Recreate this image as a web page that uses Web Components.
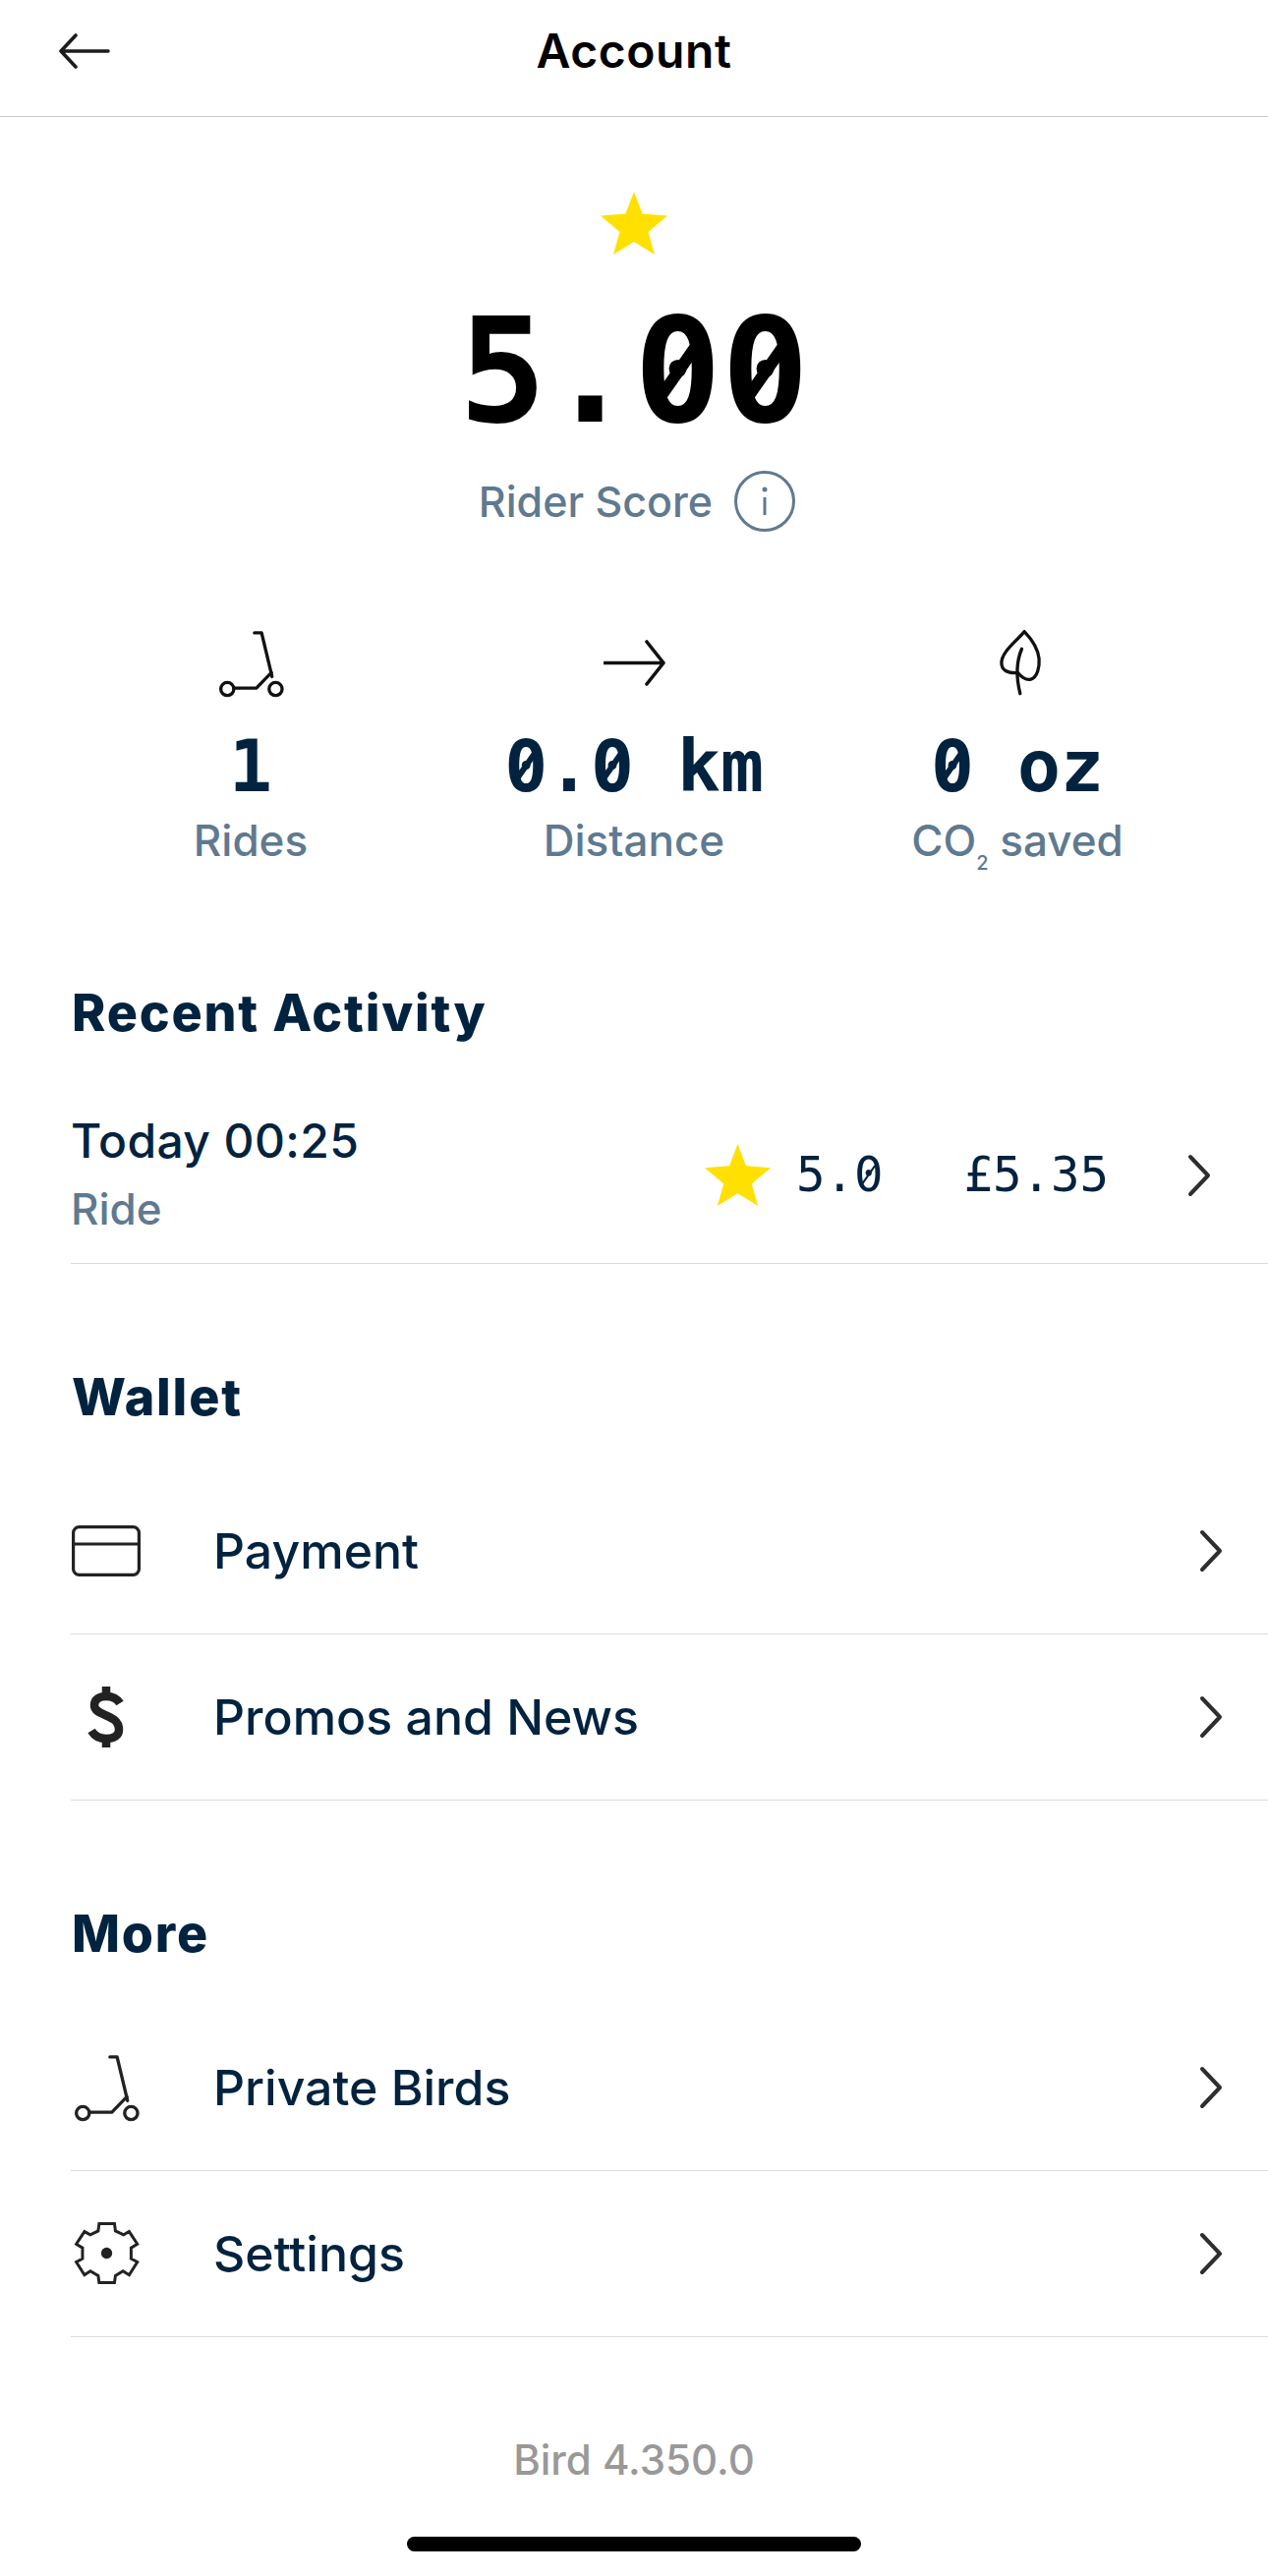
<!DOCTYPE html>
<html lang="en">
<head>
<meta charset="utf-8">
<title>Account</title>
<style>
  html, body { margin: 0; padding: 0; background: #fff; }
  body { width: 1290px; height: 2621px; overflow: hidden; font-family: Inter, sans-serif; }
  account-page { --navy: #02233f; --slate: #5f7a90; --line: #dcdcdc; --mono: "DejaVu Sans Mono", "Liberation Mono", monospace; }
</style>
</head>
<body>
<account-page>
  <app-header>Account</app-header>
  <rider-score value="5.00">Rider Score</rider-score>
  <stat-row>
    <stat-item icon="scooter" value="1">Rides</stat-item>
    <stat-item icon="arrow" value="0.0 km">Distance</stat-item>
    <stat-item icon="leaf" value="0 oz">CO<sub style="font-size:20px;line-height:0;vertical-align:-14px;">2</sub> saved</stat-item>
  </stat-row>
  <section-title style="margin-top:117px">Recent Activity</section-title>
  <activity-row when="Today 00:25" kind="Ride" rating="5.0" price="£5.35"></activity-row>
  <section-title style="margin-top:104px">Wallet</section-title>
  <menu-row icon="card" style="margin-top:40px">Payment</menu-row>
  <menu-row icon="dollar">Promos and News</menu-row>
  <section-title style="margin-top:104px">More</section-title>
  <menu-row icon="scooter" style="margin-top:40px">Private Birds</menu-row>
  <menu-row icon="gear">Settings</menu-row>
  <version-foot>Bird 4.350.0</version-foot>
</account-page>

<script>
// icons are kept here so every shadow root can stamp its own copy
const ICONS = {
  scooter: `<svg viewBox="0 0 256 256" width="85" height="85" fill="none" stroke="currentColor" stroke-width="10" stroke-linejoin="round" stroke-linecap="round"><path d="M138 36h22l32 134"/><path d="M190 158l-46 47H75"/><circle cx="55" cy="208" r="20"/><circle cx="203" cy="208" r="20"/></svg>`,
  arrow: `<svg viewBox="0 0 63 47" width="63" height="47" fill="none" stroke="currentColor" stroke-width="3.6" stroke-linecap="round" stroke-linejoin="round"><path d="M1 23.500h60M44 2l17 21.500L44 45"/></svg>`,
  leaf: `<svg viewBox="0 0 256 256" width="85" height="85" fill="none" stroke="currentColor" stroke-width="10" stroke-linecap="round" stroke-linejoin="round"><path d="M148 32C120 65 78 95 78 128c0 22 17 32 50 30 12 14 27 24 40 20 20-6 27-38 25-63-3-30-23-60-45-83z"/><path d="M140 85c-15 35-18 85-5 137"/></svg>`,
  card: `<svg viewBox="0 0 70 52" width="70" height="52" fill="none" stroke="currentColor" stroke-width="3.2"><rect x="1.600" y="1.600" width="66.800" height="48.800" rx="6"/><path d="M1.600 19h66.800"/></svg>`,
  dollar: `<svg viewBox="0 0 38 64" width="38" height="64" fill="none" stroke="currentColor"><path d="M33 18c-3-5-8-7-14-7-7 0-12 3-12 9 0 12 25 8 25 25 0 6-5 9-13 9-7 0-12-3-15-8" stroke-width="8.500"/><path d="M19 1v10M19 53v10" stroke-width="8.500"/></svg>`,
  gear: `<svg viewBox="0 0 256 256" width="85" height="85" fill="none" stroke="currentColor" stroke-width="9" stroke-linejoin="miter"><path d="M105 38h47l3 22 25 12 17-10 25 38-19 12v33l19 10-25 40-19-12-23 14-3 21h-47l-3-21-24-14-18 12-25-40 19-10v-33l-19-12 25-38 18 10 24-12z"/><circle cx="128" cy="128" r="17" fill="currentColor" stroke="none"/></svg>`,
  star: `<svg viewBox="0 0 68 64" fill="#ffe000"><path d="M34 0l8.600 22.500L68 24.500 48.500 41 55 64 34 51 13 64l6.500-23L0 24.500l25.400-2z"/></svg>`,
  chevron: `<svg viewBox="0 0 24 44" width="24" height="44" fill="none" stroke="#2e2e2e" stroke-width="4" stroke-linecap="round" stroke-linejoin="round"><path d="M3 3l18 19L3 41"/></svg>`
};

// the app's mono face has slashed zeros, so lay a bar over each 0
const ZERO_CSS = `
  .z { position: relative; display: inline-block; }
  .z::after { content: ""; position: absolute; left: .265em; top: calc(50% - .25em); width: var(--slash, .08em); height: .5em; background: currentColor; transform: rotate(35deg); }
`;
const slashed = (s) => s.replace(/0/g, `<span class="z">0</span>`);

function define(name, css, render) {
  customElements.define(name, class extends HTMLElement {
    constructor() {
      super();
      this.attachShadow({ mode: "open" });
    }
    connectedCallback() {
      this.shadowRoot.innerHTML = `<style>${css}</style>${render(this)}`;
    }
  });
}

define("account-page", `
  :host { display: flex; flex-direction: column; width: 1290px; height: 2621px; background: #fff; }
`, () => `<slot></slot>`);

define("app-header", `
  :host { display: flex; align-items: center; justify-content: center; position: relative; box-sizing: border-box; height: 118.5px; border-bottom: 1.5px solid #c8c8c8; padding-bottom: 14px; color: #000; font: 600 48px Inter, sans-serif; letter-spacing: 0.6px; }
  svg { position: absolute; left: 60px; top: 34px; }
`, () => `<svg viewBox="0 0 52 36" width="52" height="36" fill="none" stroke="#1c1c1c" stroke-width="3.6" stroke-linecap="round" stroke-linejoin="round"><path d="M50 18H2M17 2L2 18l15 16"/></svg><slot></slot>`);

define("rider-score", `
  :host { display: flex; flex-direction: column; align-items: center; padding-top: 76px; }
  .star { width: 68px; height: 64px; }
  .star svg { display: block; }
  .value { margin-top: 57px; font: 700 148px/125px var(--mono); color: #000; }
  .label { display: flex; align-items: center; gap: 22px; margin-top: 37px; padding-left: 6px; color: var(--slate); font: 500 43px/64px Inter, sans-serif; }
  .info { width: 62px; height: 62px; color: var(--slate); display: block; }
  ${ZERO_CSS}
`, (el) => `
  <div class="star">${ICONS.star}</div>
  <div class="value">${slashed(el.getAttribute("value"))}</div>
  <div class="label"><slot></slot>
    <svg class="info" viewBox="0 0 62 62" fill="none" stroke="currentColor" stroke-width="3"><circle cx="31" cy="31" r="29.500"/><path d="M31 27v18"/><circle cx="31" cy="19" r="2.500" fill="currentColor" stroke="none"/></svg>
  </div>`);

define("stat-row", `
  :host { display: grid; grid-template-columns: repeat(3, 390px); padding: 99px 0 0 60px; }
`, () => `<slot></slot>`);

define("stat-item", `
  :host { display: flex; flex-direction: column; align-items: center; color: var(--navy); }
  .icon { height: 67px; display: flex; align-items: center; color: #111; }
  .value { margin-top: 28px; font: 700 73px/88px var(--mono); }
  .label { margin-top: 4px; color: var(--slate); font: 500 44px/54px Inter, sans-serif; }
  ${ZERO_CSS}
`, (el) => `
  <div class="icon">${ICONS[el.getAttribute("icon")]}</div>
  <div class="value">${slashed(el.getAttribute("value"))}</div>
  <div class="label"><slot></slot></div>`);

define("section-title", `
  :host { display: block; padding-left: 73px; color: var(--navy); font: 800 52px/64px Inter, sans-serif; letter-spacing: 1.8px; }
`, () => `<slot></slot>`);

define("activity-row", `
  :host { display: flex; align-items: center; box-sizing: border-box; height: 174px; margin: 49px 0 0 72px; padding: 0 58px 16px 0; border-bottom: 1.5px solid var(--line); color: var(--navy); }
  .main { flex: 1; padding-top: 8px; }
  .when { font: 500 48px/60px Inter, sans-serif; letter-spacing: .4px; }
  .kind { color: var(--slate); font: 500 44px/56px Inter, sans-serif; margin-top: 11px; }
  .star { width: 67px; height: 64px; margin: 12px 26px 0 0; }
  .star svg { display: block; }
  .mono { --slash: .05em; font: 400 49px/60px var(--mono); margin-top: 12px; }
  .price { margin-left: 82px; }
  .chev { margin: 12px 0 0 80px; display: flex; }
  ${ZERO_CSS}
`, (el) => `
  <div class="main">
    <div class="when">${el.getAttribute("when")}</div>
    <div class="kind">${el.getAttribute("kind")}</div>
  </div>
  <div class="star">${ICONS.star}</div>
  <div class="mono">${slashed(el.getAttribute("rating"))}</div>
  <div class="mono price">${el.getAttribute("price")}</div>
  <div class="chev">${ICONS.chevron}</div>`);

define("menu-row", `
  :host { display: flex; align-items: center; box-sizing: border-box; height: 169px; margin-left: 72px; padding-right: 46px; border-bottom: 1.5px solid var(--line); color: var(--navy); font: 500 50px Inter, sans-serif; }
  .icon { display: flex; justify-content: center; width: 72px; margin-right: 73px; color: #222; }
  .icon svg { flex: none; }
  .label { flex: 1; }
  .chev { display: flex; }
`, (el) => `
  <div class="icon">${ICONS[el.getAttribute("icon")]}</div>
  <div class="label"><slot></slot></div>
  <div class="chev">${ICONS.chevron}</div>`);

define("version-foot", `
  :host { display: flex; flex-direction: column; align-items: center; padding-top: 100px; color: #999; font: 500 42px/50px Inter, sans-serif; }
  .bar { width: 462px; height: 15px; margin-top: 53px; border-radius: 8px; background: #000; }
`, () => `<slot></slot><div class="bar"></div>`);
</script>
</body>
</html>
